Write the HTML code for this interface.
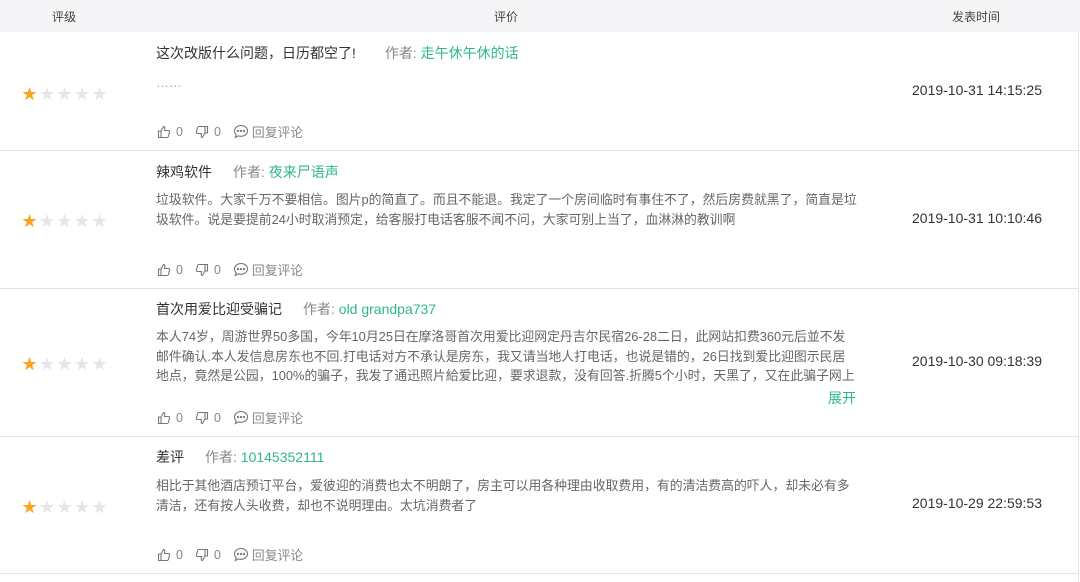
<!DOCTYPE html>
<html><head><meta charset="utf-8"><style>
*{margin:0;padding:0;box-sizing:border-box}
body{width:1080px;height:582px;background:#fff;font-family:"Liberation Sans","Noto Sans CJK SC",sans-serif;position:relative;overflow:hidden;color:#333}
.hd{position:absolute;left:0;top:0;width:1080px;height:32px;background:#f5f5f7;font-size:12px;color:#444}
.hd span{position:absolute;top:8px;transform:translateX(-50%)}
.line{position:absolute;left:0;width:1078px;height:1px;background:#e3e3e3}
.vl{position:absolute;left:1078px;top:32px;width:1px;height:550px;background:#e3e3e3}
.a{position:absolute;white-space:nowrap}
.t{font-size:14px;color:#333;left:156px}
.t .au{color:#888;margin-left:21px}
.t .au b{font-weight:normal;color:#2eb789}
.b{font-size:12.85px;color:#666;left:156px;line-height:19.5px}
.d{font-size:14px;color:#333;left:912px}
.st{left:22px;font-size:15px;letter-spacing:2.5px;color:#e6e6e6}
.st i{font-style:normal;color:#f5a623}
.ac{left:157px;font-size:12.5px;color:#888;display:flex;align-items:center}
.ac svg{margin-right:5px}
.ac span{margin-right:12px}
</style></head><body>
<div class="hd"><span style="left:64px">评级</span><span style="left:506px">评价</span><span style="left:976px">发表时间</span></div>
<div class="vl"></div>

<div class="a t" style="top:43px">这次改版什么问题，日历都空了!<span class="au" style="margin-left:29px">作者: <b>走午休午休的话</b></span></div>
<div class="a b" style="top:73px;color:#aaa">……</div>
<div class="a st" style="top:83px"><i>★</i>★★★★</div>
<div class="a d" style="top:82px">2019-10-31 14:15:25</div>
<div class="a ac" style="top:122px"></div>
<div class="line" style="top:150px"></div>

<div class="a t" style="top:162px">辣鸡软件<span class="au">作者: <b>夜来尸语声</b></span></div>
<div class="a b" style="top:190px">垃圾软件。大家千万不要相信。图片p的简直了。而且不能退。我定了一个房间临时有事住不了，然后房费就黑了，简直是垃<br>圾软件。说是要提前24小时取消预定，给客服打电话客服不闻不问，大家可别上当了，血淋淋的教训啊</div>
<div class="a st" style="top:210px"><i>★</i>★★★★</div>
<div class="a d" style="top:210px">2019-10-31 10:10:46</div>
<div class="a ac" style="top:260px"></div>
<div class="line" style="top:288px"></div>

<div class="a t" style="top:299px">首次用爱比迎受骗记<span class="au">作者: <b>old grandpa737</b></span></div>
<div class="a b" style="top:327px">本人74岁，周游世界50多国，今年10月25日在摩洛哥首次用爱比迎网定丹吉尔民宿26-28二日，此网站扣费360元后並不发<br>邮件确认.本人发信息房东也不回.打电话对方不承认是房东，我又请当地人打电话，也说是错的，26日找到爱比迎图示民居<br>地点，竟然是公园，100%的骗子，我发了通迅照片給爱比迎，要求退款，没有回答.折腾5个小时，天黑了，又在此骗子网上</div>
<div class="a" style="top:388px;left:828px;font-size:14px;color:#2eb789">展开</div>
<div class="a st" style="top:353px"><i>★</i>★★★★</div>
<div class="a d" style="top:353px">2019-10-30 09:18:39</div>
<div class="a ac" style="top:408px"></div>
<div class="line" style="top:436px"></div>

<div class="a t" style="top:447px">差评<span class="au">作者: <b>10145352111</b></span></div>
<div class="a b" style="top:476px">相比于其他酒店预订平台，爱彼迎的消费也太不明朗了，房主可以用各种理由收取费用，有的清洁费高的吓人，却未必有多<br>清洁，还有按人头收费，却也不说明理由。太坑消费者了</div>
<div class="a st" style="top:496px"><i>★</i>★★★★</div>
<div class="a d" style="top:495px">2019-10-29 22:59:53</div>
<div class="a ac" style="top:545px"></div>
<div class="line" style="top:573px"></div>

<script>
var h='<svg width="14" height="14" viewBox="0 0 14 14" fill="none" stroke="#777" stroke-width="1.1"><path d="M1.5 6h2.5v6.5H1.5z M4 6l2.5-4.5c1 0 1.5.7 1.3 1.8L7.5 5.5h4c.8 0 1.3.7 1.1 1.4l-1.2 4.6c-.2.6-.6 1-1.2 1H4"/></svg><span>0</span>'+
'<svg width="14" height="14" viewBox="0 0 14 14" fill="none" stroke="#777" stroke-width="1.1"><g transform="rotate(180 7 7)"><path d="M1.5 6h2.5v6.5H1.5z M4 6l2.5-4.5c1 0 1.5.7 1.3 1.8L7.5 5.5h4c.8 0 1.3.7 1.1 1.4l-1.2 4.6c-.2.6-.6 1-1.2 1H4"/></g></svg><span>0</span>'+
'<svg width="16" height="15" viewBox="0 0 16 15" fill="none" stroke="#777" stroke-width="1.1"><path d="M8 1.5c3.6 0 6.5 2.4 6.5 5.4S11.6 12.3 8 12.3c-.9 0-1.8-.1-2.6-.4L2.3 13.5l.9-2.7C2 9.8 1.5 8.4 1.5 6.9 1.5 3.9 4.4 1.5 8 1.5z"/><circle cx="5" cy="7" r=".6" fill="#777"/><circle cx="8" cy="7" r=".6" fill="#777"/><circle cx="11" cy="7" r=".6" fill="#777"/></svg><span style="font-size:12.8px;margin-left:-2px">回复评论</span>';
document.querySelectorAll('.ac').forEach(function(e){e.innerHTML=h});
</script>
</body></html>
